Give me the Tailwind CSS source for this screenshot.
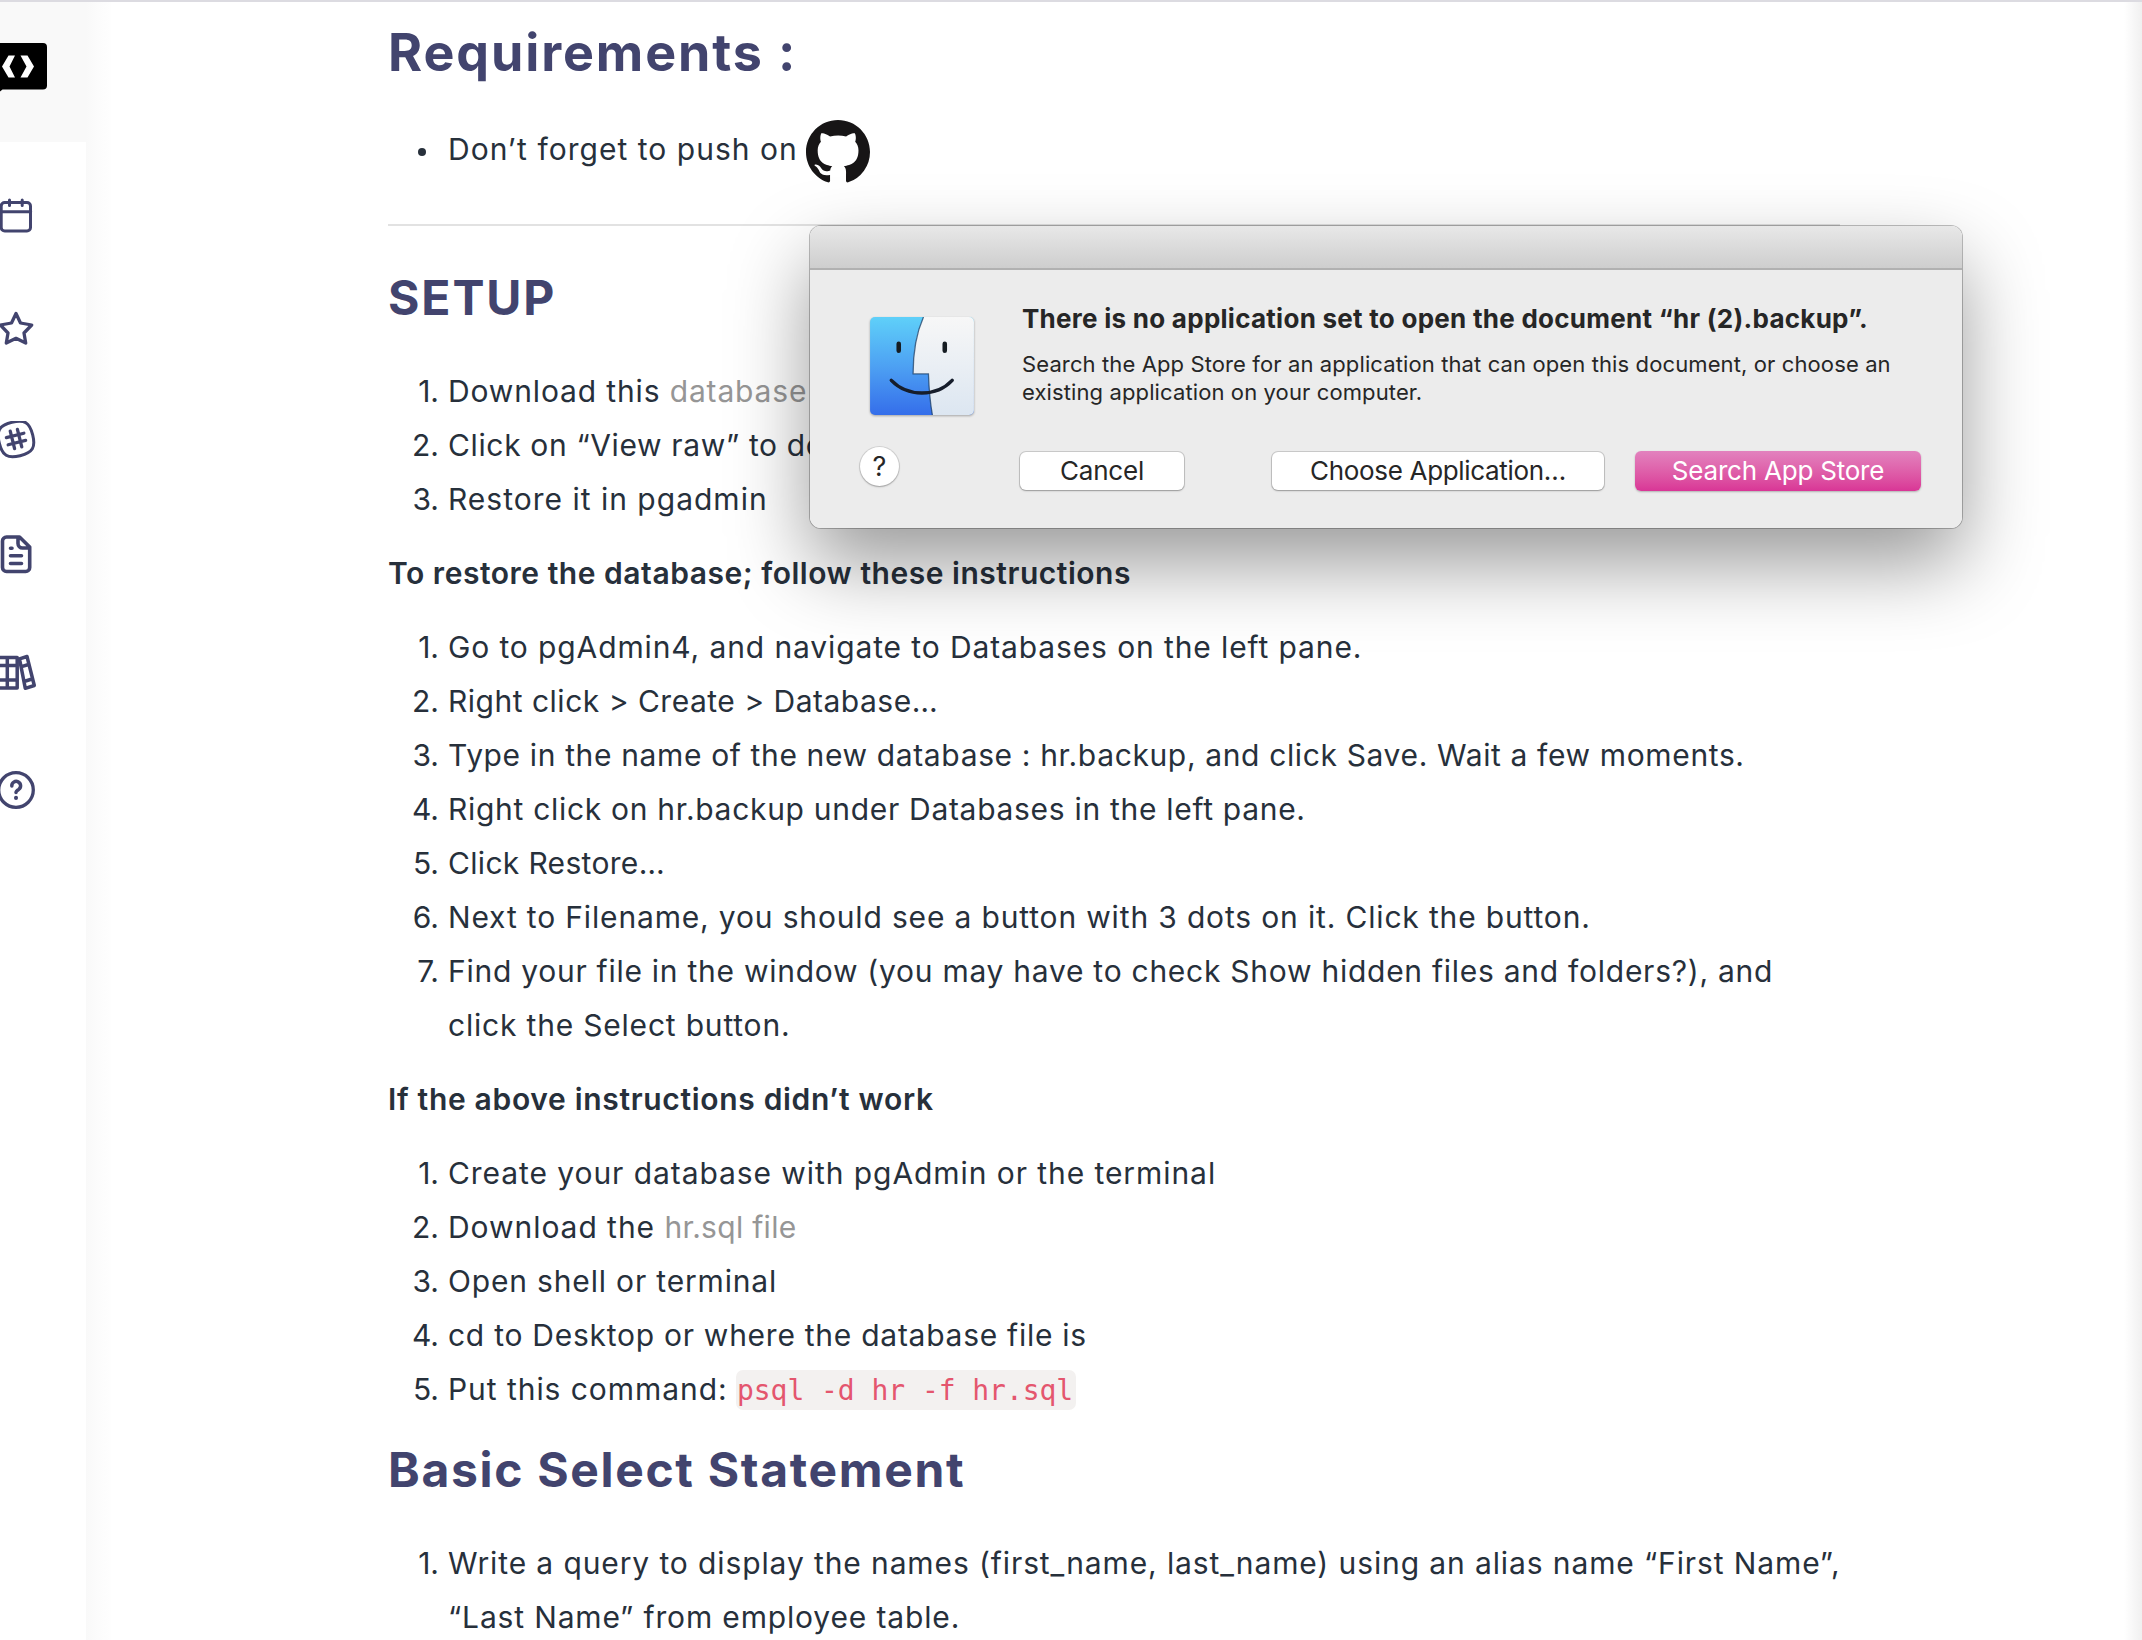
<!DOCTYPE html>
<html lang="en">
<head>
<meta charset="utf-8">
<title>SQL exercises</title>
<script src="https://cdn.jsdelivr.net/npm/@tailwindcss/browser@4"></script>
</head>
<body class="relative h-[1640px] w-[2142px] overflow-hidden bg-white font-['Inter',sans-serif] text-[30px] leading-[54px] text-[#27303b]">
<div class="flex h-[1640px] flex-col">
  <div class="h-[2px] shrink-0 bg-[#dcdbe1]"></div>
  <div class="flex min-h-0 flex-1">

    <!-- Sidebar -->
    <nav class="flex w-[86px] shrink-0 flex-col bg-white text-[#42446e]">
      <div class="h-[140px] bg-[#f9f9f9] pt-[40px]">
        <svg class="block" width="50" height="50" viewBox="0 0 50 50">
          <path d="M0 1H43a4 4 0 0 1 4 4V43.500a4 4 0 0 1-4 4H2.500L0 49.500Z" fill="#000"/>
          <path d="M8.500 13.500H15L9.500 24.500L15 35.500H8.500L2 24.500ZM20.500 13.500H27.500L34 24.500L27.500 35.500H20.500L26.500 24.500Z" fill="#fff"/>
        </svg>
      </div>
      <div class="flex flex-col pt-[54px]">
        <svg class="block" width="40" height="40" viewBox="0 0 40 40" fill="none" stroke="currentColor" stroke-width="3" stroke-linecap="round" stroke-linejoin="round"><rect x="1.200" y="6.500" width="29.300" height="28.500" rx="3.500"/><path d="M1 15.700H30.700M9.500 4V9.500M22.200 4V9.500"/></svg>
        <svg class="mt-[71px] block" width="40" height="40" viewBox="0 0 40 40" fill="none" stroke="currentColor" stroke-width="3.300" stroke-linejoin="round"><path d="M16 6.500L20.500 16L31.700 18L24 26L25.700 36L16 31.300L6.300 36L8 26L.3 18L11.500 16Z"/></svg>
        <svg class="mt-[74px] block" width="40" height="40" viewBox="0 0 40 40" fill="none" stroke="currentColor" stroke-width="3" stroke-linecap="round"><g transform="rotate(-14 16 18)"><path d="M16 .8C29 .8 33.200 5 33.200 18S29 35.200 16 35.200S-1.200 31 -1.200 18S3 .8 16 .8Z"/><path d="M12.300 9V27M19.700 9V27M7 14.300H25M7 21.700H25" stroke-width="3.300"/></g></svg>
        <svg class="mt-[72px] block" width="40" height="44" viewBox="0 0 40 44" fill="none" stroke="currentColor" stroke-width="3.600" stroke-linecap="round" stroke-linejoin="round"><path d="M6.500 4H19.500L29.700 14V34.500a4 4 0 0 1-4 4H6.500a4 4 0 0 1-4-4V8a4 4 0 0 1 4-4ZM18 4.500V10.500a4.500 4.500 0 0 0 4.500 4.500H29"/><path d="M10.500 15.200H12M10.500 22.700H21.500M10.500 30.500H21.500"/></svg>
        <svg class="mt-[74px] block" width="40" height="44" viewBox="0 0 40 44" fill="none" stroke="currentColor" stroke-width="3.500" stroke-linejoin="round"><path d="M-6 6.500H17.200V37H-6ZM7.300 6.500V37M-6 14.500H17.200M-6 29H17.200"/><path d="M19.500 7.800L27 5.500L34.300 34.500L25.300 37.300ZM21.500 15.600L28.600 13.500M24 30.500L32 28"/></svg>
        <svg class="mt-[76px] block" width="40" height="44" viewBox="0 0 40 44" fill="none" stroke="currentColor" stroke-width="3.300" stroke-linecap="round" stroke-linejoin="round"><circle cx="16" cy="19" r="17.300"/><path d="M11.800 15A4.400 4.400 0 1 1 18.700 18.400Q16 20 16 21.500" stroke-width="3.500"/><path d="M16 26.800V26.900" stroke-width="4"/></svg>
      </div>
    </nav>
    <div class="w-[25px] shrink-0 bg-gradient-to-r from-[#f9f9f9] via-[#fcfcfc] to-[#fefefe]"></div>

    <!-- Lesson -->
    <main class="w-[1729px] shrink-0 whitespace-nowrap pl-[277px] pt-[21px]">
      <h1 class="text-[52px] font-bold leading-[60px] tracking-[1.883px] text-[#42446e]">Requirements :</h1>
      <ul class="mt-[39px]">
        <li class="flex h-[54px] items-center">
          <span class="mr-[22px] ml-[30px] size-2 translate-y-[3px] rounded-full bg-[#27303b]"></span>
          <span class="tracking-[1.024px]">Don’t forget to push on</span>
          <svg class="mt-[5px] ml-[8px]" width="64" height="64" viewBox="0 0 16 16" fill="#171516"><path d="M8 0C3.580 0 0 3.580 0 8c0 3.540 2.290 6.530 5.470 7.590.4.070.55-.17.55-.38 0-.19-.01-.82-.01-1.490-2.010.37-2.530-.49-2.690-.94-.09-.23-.48-.94-.82-1.130-.28-.15-.68-.52-.01-.53.63-.01 1.080.58 1.230.82.72 1.210 1.870.87 2.330.66.070-.52.28-.87.51-1.070-1.780-.2-3.640-.89-3.640-3.950 0-.87.310-1.590.82-2.150-.08-.2-.36-1.020.08-2.120 0 0 .67-.21 2.200.82.640-.18 1.320-.27 2-.27s1.360.09 2 .27c1.530-1.040 2.200-.82 2.200-.82.440 1.100.16 1.920.08 2.120.51.560.82 1.270.82 2.150 0 3.070-1.870 3.750-3.650 3.950.29.250.54.730.54 1.480 0 1.070-.01 1.930-.01 2.200 0 .21.15.46.55.38A8.010 8.010 0 0 0 16 8c0-4.420-3.580-8-8-8z"/></svg>
        </li>
      </ul>
      <div class="mt-[48px] h-[2px] bg-[#e2e2e2]"></div>
      <h2 class="mt-[42px] text-[48px] font-bold leading-[60px] tracking-[1.9px] text-[#42446e]">SETUP</h2>
      <ol class="mt-[36px]">
        <li class="flex"><span class="mr-[9px] w-[51px] shrink-0 text-right">1.</span><span class="tracking-[0.856px]">Download this <a class="text-[#969696]">database</a></span></li>
        <li class="flex"><span class="mr-[9px] w-[51px] shrink-0 text-right">2.</span><span class="tracking-[0.64px]">Click on “View raw” to do</span></li>
        <li class="flex"><span class="mr-[9px] w-[51px] shrink-0 text-right">3.</span><span class="tracking-[1px]">Restore it in pgadmin</span></li>
      </ol>
      <p class="mt-5 font-semibold tracking-[0.529px]">To restore the database; follow these instructions</p>
      <ol class="mt-5">
        <li class="flex"><span class="mr-[9px] w-[51px] shrink-0 text-right">1.</span><span class="tracking-[0.885px]">Go to pgAdmin4, and navigate to Databases on the left pane.</span></li>
        <li class="flex"><span class="mr-[9px] w-[51px] shrink-0 text-right">2.</span><span class="tracking-[0.5px]">Right click &gt; Create &gt; Database…</span></li>
        <li class="flex"><span class="mr-[9px] w-[51px] shrink-0 text-right">3.</span><span class="tracking-[0.635px]">Type in the name of the new database : hr.backup, and click Save. Wait a few moments.</span></li>
        <li class="flex"><span class="mr-[9px] w-[51px] shrink-0 text-right">4.</span><span class="tracking-[0.7px]">Right click on hr.backup under Databases in the left pane.</span></li>
        <li class="flex"><span class="mr-[9px] w-[51px] shrink-0 text-right">5.</span><span class="tracking-[0.32px]">Click Restore…</span></li>
        <li class="flex"><span class="mr-[9px] w-[51px] shrink-0 text-right">6.</span><span class="tracking-[0.84px]">Next to Filename, you should see a button with 3 dots on it. Click the button.</span></li>
        <li class="flex"><span class="mr-[9px] w-[51px] shrink-0 text-right">7.</span><span class="tracking-[0.735px]">Find your file in the window (you may have to check Show hidden files and folders?), and<br><span class="tracking-[0.8px]">click the Select button.</span></span></li>
      </ol>
      <p class="mt-5 font-semibold tracking-[0.68px]">If the above instructions didn’t work</p>
      <ol class="mt-5">
        <li class="flex"><span class="mr-[9px] w-[51px] shrink-0 text-right">1.</span><span class="tracking-[0.93px]">Create your database with pgAdmin or the terminal</span></li>
        <li class="flex"><span class="mr-[9px] w-[51px] shrink-0 text-right">2.</span><span class="tracking-[0.678px]"><span class="tracking-[0.95px]">Download the </span><a class="tracking-[0.3px] text-[#969696]">hr.sql file</a></span></li>
        <li class="flex"><span class="mr-[9px] w-[51px] shrink-0 text-right">3.</span><span class="tracking-[0.83px]">Open shell or terminal</span></li>
        <li class="flex"><span class="mr-[9px] w-[51px] shrink-0 text-right">4.</span><span class="tracking-[0.735px]">cd to Desktop or where the database file is</span></li>
        <li class="flex items-center"><span class="mr-[9px] w-[51px] shrink-0 text-right">5.</span><span class="w-[288px] tracking-[0.946px]">Put this command:</span><code class="mt-[2px] h-[40px] w-[340px] rounded-[7px] bg-[#f3f1f0] pl-[1px] font-['DejaVu_Sans_Mono',monospace] text-[28px] leading-[42px] tracking-[-0.05px] text-[#e4566e]">psql -d hr -f hr.sql</code></li>
      </ol>
      <h2 class="mt-6 text-[48px] font-bold leading-[60px] tracking-[1.67px] text-[#42446e]">Basic Select Statement</h2>
      <ol class="mt-[36px]">
        <li class="flex"><span class="mr-[9px] w-[51px] shrink-0 text-right">1.</span><span class="tracking-[0.89px]">Write a query to display the names (first_name, last_name) using an alias name “First Name”,<br><span class="tracking-[0.85px]">“Last Name” from employee table.</span></span></li>
      </ol>
    </main>
    <div class="flex-1"></div>
    <div class="w-[18px] shrink-0 bg-gradient-to-r from-white to-[#f0f0f0]"></div>
  </div>
</div>

<!-- System dialog -->
<div class="absolute top-[226px] left-[810px] h-[302px] w-[1152px] rounded-[11px] shadow-[0_0_0_1px_rgb(0_0_0/0.25),0_36px_80px_rgb(0_0_0/0.4)]">
<section class="flex h-full flex-col overflow-hidden rounded-[11px] bg-[#ececec] text-[#262626]" role="dialog">
  <div class="h-[44px] shrink-0 border-b-2 border-[#b1b1b1] bg-gradient-to-b from-[#e8e8e8] to-[#cecece]"></div>
  <div class="flex flex-1 whitespace-nowrap">
    <div class="w-[212px] pt-[47px] pl-[60px]">
      <svg class="block overflow-visible drop-shadow-[0_1px_1px_rgb(0_0_0/0.3)]" width="104" height="98" viewBox="0 0 105 99">
        <defs>
          <linearGradient id="blue" x2="0" y2="1"><stop stop-color="#5fd0f9"/><stop offset=".5" stop-color="#4da1f3"/><stop offset="1" stop-color="#356eea"/></linearGradient>
          <linearGradient id="pale" x2="0" y2="1"><stop stop-color="#f7f7f7"/><stop offset="1" stop-color="#dce6f1"/></linearGradient>
          <clipPath id="tile"><rect width="105" height="99" rx="5"/></clipPath>
        </defs>
        <g clip-path="url(#tile)">
          <rect width="105" height="99" fill="url(#blue)"/>
          <path d="M54 0C46 18 43.500 36 43.500 57.500H59C59.500 72 60.500 85 63 99H105V0Z" fill="url(#pale)"/>
          <path d="M54 0C46 18 43.500 36 43.500 57.500H59C59.500 72 60.500 85 63 99" fill="none" stroke="#173c66" stroke-width="1.300" opacity=".75"/>
        </g>
        <path d="M29 27V34M75.500 27V34" stroke="#161d23" stroke-width="4.600" stroke-linecap="round"/>
        <path d="M21.500 64C38 81 67 81 83 64" fill="none" stroke="#161d2b" stroke-width="3.500" stroke-linecap="round"/>
      </svg>
      <div class="mt-[32px] -ml-[10px] flex size-[39px] items-center justify-center rounded-full bg-white text-[27px] leading-none shadow-[0_0_0_1px_rgb(0_0_0/0.1),0_1px_2px_rgb(0_0_0/0.25)]">?</div>
    </div>
    <div class="flex-1 pt-[30px]">
      <h3 class="text-[26px] font-bold leading-[38px] tracking-[0.265px]">There is no application set to open the document “hr (2).backup”.</h3>
      <p class="mt-[12px] text-[22px] leading-[28px] tracking-[0.113px]">Search the App Store for an application that can open this document, or choose an<br>existing application on your computer.</p>
      <div class="mt-[46px] -ml-[2px] flex text-[26px] leading-[38px]">
        <button class="h-[38px] w-[164px] rounded-[6px] bg-white tracking-[-0.193px] shadow-[0_0_0_1px_rgb(0_0_0/0.14),0_1px_2px_rgb(0_0_0/0.25)]">Cancel</button>
        <button class="ml-[88px] h-[38px] w-[332px] rounded-[6px] bg-white tracking-[-0.326px] shadow-[0_0_0_1px_rgb(0_0_0/0.14),0_1px_2px_rgb(0_0_0/0.25)]">Choose Application…</button>
        <button class="-mt-px ml-[31px] h-[40px] w-[286px] rounded-[6px] bg-gradient-to-b from-[#e282be] to-[#d93596] tracking-[-0.211px] text-white shadow-[0_1px_2px_rgb(0_0_0/0.25)]">Search App Store</button>
      </div>
    </div>
  </div>
</section>
</div>
</body>
</html>
